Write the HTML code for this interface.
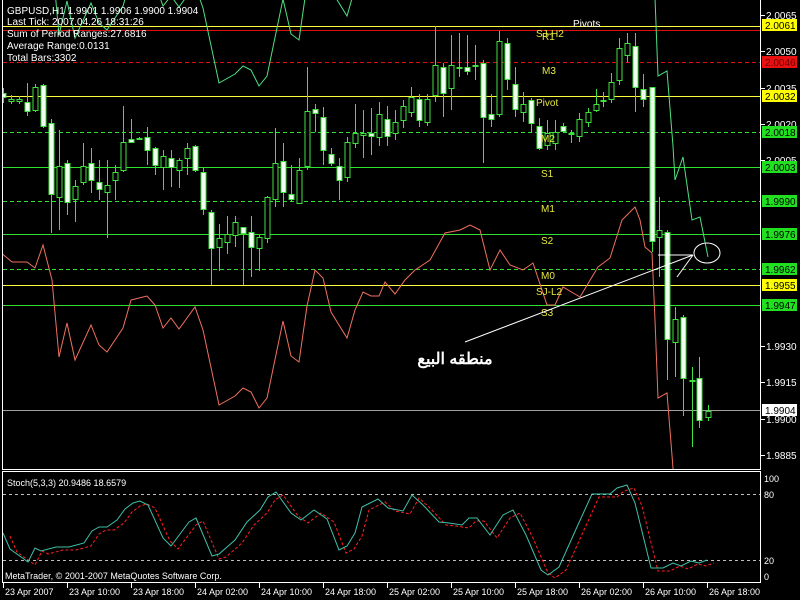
<!DOCTYPE html>
<html><head><meta charset="utf-8"><style>
html,body{margin:0;padding:0;background:#000;width:800px;height:600px;overflow:hidden}
svg{display:block}
text{font-family:"Liberation Sans",sans-serif}
</style></head><body>
<svg id="s" width="800" height="600" xmlns="http://www.w3.org/2000/svg">
<rect width="800" height="600" fill="#000"/>
<defs><clipPath id="mc"><rect x="3" y="0" width="757" height="469"/></clipPath>
<clipPath id="sc"><rect x="3" y="472" width="757" height="110"/></clipPath></defs>
<g id="lines"></g>
<g id="cand" clip-path="url(#mc)"></g>
<g id="ind" clip-path="url(#mc)"></g>
<g id="stoch" clip-path="url(#sc)"></g>
<!-- borders -->
<line x1="2.5" y1="0" x2="2.5" y2="469" stroke="#fff"/>
<line x1="760.5" y1="0" x2="760.5" y2="469" stroke="#fff"/>
<line x1="2" y1="469.5" x2="761" y2="469.5" stroke="#fff"/>
<rect x="2.5" y="471.5" width="758" height="111" fill="none" stroke="#fff"/>
<!-- info text -->
<g fill="#fff" font-size="10">
<text x="7" y="14">GBPUSD,H1  1.9901 1.9906 1.9900 1.9904</text>
<text x="7" y="25">Last Tick: 2007.04.26 18:31:26</text>
<text x="7" y="37">Sum of Period Ranges:27.6816</text>
<text x="7" y="49">Average Range:0.0131</text>
<text x="7" y="61">Total Bars:3302</text>
</g>
<!-- pivot labels -->
<g fill="#e8e840" font-size="10">
<text x="573" y="27" fill="#fff">Pivots</text>
<text x="542" y="40">R1</text>
<text x="536" y="37">SJ-H2</text>
<text x="542" y="74">M3</text>
<text x="536" y="106">Pivot</text>
<text x="541" y="142">M2</text>
<text x="541" y="177">S1</text>
<text x="541" y="212">M1</text>
<text x="541" y="244">S2</text>
<text x="541" y="279">M0</text>
<text x="536" y="295">SJ-L2</text>
<text x="541" y="316">S3</text>
</g>
<!-- annotations -->
<g stroke="#fff" fill="none" stroke-width="1">
<line x1="465" y1="342" x2="693" y2="255"/>
<line x1="658" y1="255" x2="693" y2="255"/>
<line x1="677" y1="277" x2="693" y2="255"/>
<ellipse cx="707" cy="253" rx="13" ry="10"/>
</g>
<text x="455" y="364" fill="#fff" font-size="16" font-weight="bold" text-anchor="middle" font-family="'DejaVu Sans',sans-serif">منطقه البيع</text>
<!-- axis -->
<g id="axis" font-size="10" fill="#fff"></g>
<!-- stoch labels -->
<g fill="#fff" font-size="9">
<text x="7" y="486">Stoch(5,3,3) 20.9486 18.6579</text>
<text x="5" y="579">MetaTrader, © 2001-2007 MetaQuotes Software Corp.</text>
<text x="764" y="482">100</text>
<text x="764" y="498">80</text>
<text x="764" y="564">20</text>
<text x="764" y="580">0</text>
</g>
<g id="dates" fill="#fff" font-size="9"></g>
</svg>
<script>
var NS='http://www.w3.org/2000/svg';
function add(g,tag,a,txt){var e=document.createElementNS(NS,tag);for(var k in a)e.setAttribute(k,a[k]);if(txt!=null)e.textContent=txt;document.getElementById(g).appendChild(e);return e;}
// horizontal lines
var H=[[26,'#ffff40',0],[30,'#e01010',0],[62,'#e01010',1],[96,'#ffff40',0],[132,'#30e030',1],[167,'#30e030',0],[201,'#30e030',1],[234,'#30e030',0],[269,'#30e030',1],[285,'#ffff40',0],[305,'#30e030',0],[410,'#a0a0a0',0]];
H.forEach(function(h){var a={x1:3,x2:760,y1:h[0]+.5,y2:h[0]+.5,stroke:h[1]};if(h[2])a['stroke-dasharray']='4,3';add('lines','line',a);});
// candles
var C=[[3,93,97,88,103,1],[11,99,101,95,104,0],[19,99,101,96,104,0],[27,102,111,83,116,1],[35,87,110,84,112,0],[43,85,126,84,128,1],[51,123,194,119,233,1],[59,166,197,130,230,0],[67,163,202,160,215,1],[75,186,199,180,222,0],[83,166,182,143,185,0],[91,163,180,148,193,1],[99,182,189,160,200,1],[107,185,192,160,238,0],[115,172,180,165,200,0],[123,142,170,106,172,0],[131,139,142,119,143,1],[139,138,139,137,140,0],[147,137,150,127,165,1],[155,148,165,147,175,1],[163,156,167,150,190,0],[171,158,167,150,187,1],[179,160,170,158,188,0],[187,148,158,143,175,0],[195,146,170,145,172,1],[203,172,209,168,215,1],[211,212,248,210,285,1],[219,238,247,224,271,0],[227,234,242,216,254,0],[235,222,235,216,247,0],[243,227,233,227,285,1],[251,232,247,216,277,1],[259,237,248,235,271,0],[267,197,238,196,243,0],[275,163,199,128,207,0],[283,161,192,143,207,1],[291,194,199,165,202,1],[299,170,203,158,204,0],[307,111,166,67,170,0],[315,109,113,104,132,1],[323,117,150,107,165,1],[331,154,163,148,166,1],[339,166,180,158,200,1],[347,142,177,137,182,0],[355,133,143,104,148,0],[363,133,135,110,158,0],[371,133,136,108,155,1],[379,114,137,102,146,0],[387,119,136,106,146,1],[395,122,133,110,140,0],
[403,106,120,100,128,0],[411,97,112,87,117,0],[419,99,120,94,127,1],[427,99,122,94,126,0],[435,65,95,26,102,0],[443,67,93,63,117,1],[451,65,88,35,110,0],[459,67,68,33,77,0],[467,67,71,35,75,1],[475,65,66,45,80,0],[483,63,117,60,163,1],[491,114,119,94,127,1],[499,41,114,31,117,0],[507,43,79,38,90,1],[515,84,109,67,117,1],[523,104,112,92,122,0],[531,100,123,98,133,1],[539,126,148,118,150,1],[547,133,145,120,150,0],[555,132,143,120,150,0],[563,126,131,123,133,1],[571,133,134,130,143,0],[579,119,136,113,142,0],[588,112,122,108,127,0],[596,104,110,89,112,0],[603,100,101,92,107,0],[611,82,99,73,103,0],[619,48,80,38,85,0],[627,43,55,33,62,0],[635,46,87,33,112,1],[643,89,99,74,107,1],[652,87,241,87,252,1],[659,230,237,197,277,0],[667,232,339,230,380,1],[675,319,342,307,377,0],[683,317,378,315,416,1],[692,380,381,367,447,0],[699,378,420,357,428,1],[708,411,417,405,421,0]];
C.forEach(function(c){var x=c[0];add('cand','line',{x1:x+.5,x2:x+.5,y1:c[3],y2:c[4],stroke:'#40e040'});
var h=Math.max(1,c[2]-c[1]);add('cand','rect',{x:x-2,y:c[1]+.5,width:5,height:h,fill:c[5]?'#f0fff0':'#000',stroke:'#40e040'});});
// red/green indicator
var R=[[0,252],[12,262],[27,262],[35,268],[43,245],[52,280],[59,357],[67,323],[75,360],[91,325],[99,345],[107,352],[123,328],[131,300],[139,298],[147,296],[155,305],[163,328],[171,318],[179,329],[195,307],[203,330],[219,405],[235,396],[243,388],[251,392],[259,408],[267,398],[283,321],[291,356],[299,362],[307,306],[315,270],[323,278],[331,312],[347,338],[355,310],[363,292],[371,296],[379,296],[385,282],[395,294],[405,280],[415,270],[430,260],[445,233],[460,230],[470,225],[480,230],[490,270],[500,250],[510,265],[523,270],[533,263],[547,305],[555,305],[563,287],[580,297],[598,267],[610,258],[622,220],[635,207],[640,220],[645,247],[652,253],[655,320],[658,398],[667,393],[673,468],[675,502],[683,479],[692,542],[700,539],[708,579]];
var pr=R.map(function(p){return p[0]+','+p[1]}).join(' ');
var pg=R.map(function(p){return p[0]+','+(p[1]-322)}).join(' ');
add('ind','polyline',{points:pr,fill:'none',stroke:'#f07060'});
add('ind','polyline',{points:pg,fill:'none',stroke:'#50e080'});
// axis labels
[['2.0065',15],['2.0050',51],['2.0035',88],['2.0020',124],['2.0005',160],['1.9930',346],['1.9915',382],['1.9900',419],['1.9885',455]].forEach(function(a){
add('axis','line',{x1:761,x2:765,y1:a[1]+.5,y2:a[1]+.5,stroke:'#fff'});add('axis','text',{x:766,y:a[1]+4},a[0]);});
[['2.0061',25,'#ffff00','#000'],['2.0046',62,'#e81010','#700000'],['2.0032',96,'#ffff00','#000'],['2.0018',132,'#20e020','#000'],['2.0003',167,'#20e020','#000'],['1.9990',201,'#20e020','#000'],['1.9976',234,'#20e020','#000'],['1.9962',269,'#20e020','#000'],['1.9955',285,'#ffff00','#000'],['1.9947',305,'#20e020','#000'],['1.9904',410,'#ffffff','#000']].forEach(function(b){
add('axis','rect',{x:762,y:b[1]-6,width:35,height:12,fill:b[2]});add('axis','text',{x:765,y:b[1]+4,fill:b[3]},b[0]);});
// stoch
add('stoch','line',{x1:3,x2:760,y1:494.5,y2:494.5,stroke:'#c0c0c0','stroke-dasharray':'3,3'});
add('stoch','line',{x1:3,x2:760,y1:560.5,y2:560.5,stroke:'#c0c0c0','stroke-dasharray':'3,3'});
var S=[[3,533],[10,549],[28,562],[35,548],[41,551],[56,547],[69,547],[84,543],[92,531],[99,527],[107,527],[117,520],[125,509],[133,503],[140,501],[148,505],[163,538],[171,546],[189,522],[196,518],[212,556],[219,554],[235,540],[247,522],[260,510],[268,497],[276,492],[291,513],[301,520],[314,510],[327,519],[339,550],[347,546],[355,533],[362,507],[378,499],[388,508],[403,511],[412,495],[423,505],[439,522],[449,523],[462,525],[469,518],[477,518],[490,535],[503,515],[513,510],[526,535],[541,570],[548,575],[559,567],[577,527],[592,494],[610,494],[617,488],[627,485],[635,503],[651,568],[663,568],[673,563],[681,566],[691,561],[699,563],[707,560]];
add('stoch','polyline',{points:S.map(function(p){return (p[0]+7)+','+(p[1]+3)}).join(' '),fill:'none',stroke:'#ff2020','stroke-dasharray':'3,2'});
add('stoch','polyline',{points:S.map(function(p){return p[0]+','+p[1]}).join(' '),fill:'none',stroke:'#40c0a8'});
// dates
['23 Apr 2007','23 Apr 10:00','23 Apr 18:00','24 Apr 02:00','24 Apr 10:00','24 Apr 18:00','25 Apr 02:00','25 Apr 10:00','25 Apr 18:00','26 Apr 02:00','26 Apr 10:00','26 Apr 18:00'].forEach(function(d,i){
var x=3+i*64;add('dates','line',{x1:x+.5,x2:x+.5,y1:583,y2:588,stroke:'#fff'});add('dates','text',{x:x+2,y:595},d);});
</script>
</body></html>
